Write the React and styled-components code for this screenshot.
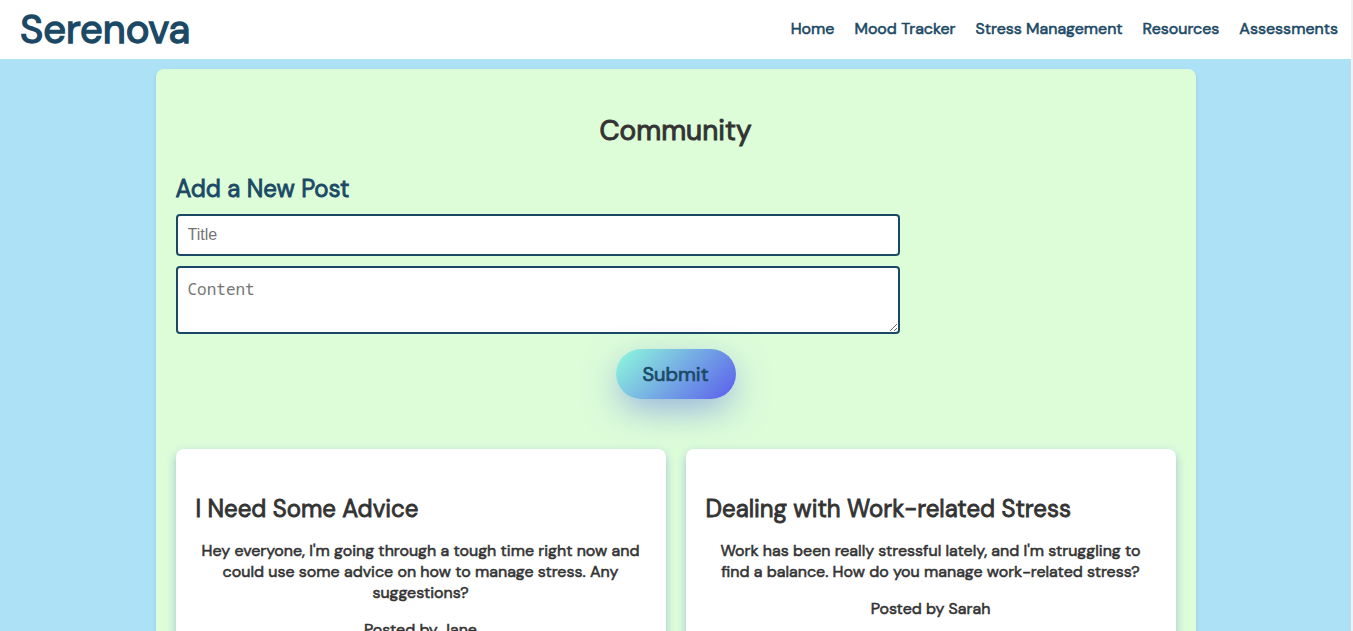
import React from "react";
import styled, { createGlobalStyle, css } from "styled-components";

const navy = "#1b4965";
const ink = "#333333";

const GlobalStyle = createGlobalStyle`
  *, *::before, *::after { box-sizing: border-box; }
  body {
    margin: 0;
    background: #ade1f5;
    color: ${ink};
    font: 400 16px/21px "DM Sans", Inter, sans-serif;
  }
`;

/* Thickens the regular cut evenly without changing its widths. */
const heavy = css`
  font-weight: 400;
  -webkit-text-stroke: 0.035em currentColor;
`;

const Page = styled.div`
  min-height: 100vh;
  border-right: 2px solid #f1f1f1;
`;

const Header = styled.header`
  display: flex;
  align-items: center;
  justify-content: space-between;
  height: 59px;
  padding: 0 13px 2px 20px;
  background: #ffffff;
`;

const Logo = styled.h1`
  ${heavy}
  margin: 0;
  color: ${navy};
  font-size: 40px;
  line-height: 52px;
`;

const Nav = styled.nav`
  display: flex;
  gap: 20px;
`;

const NavLink = styled.a`
  ${heavy}
  color: ${navy};
  text-decoration: none;
`;

const Main = styled.main`
  max-width: 1040px;
  margin: 10px auto;
  padding: 20px;
  border-radius: 8px;
  background: #ddfdd9;
  box-shadow: 0 2px 4px rgba(0, 0, 0, 0.1);
`;

const PageTitle = styled.h2`
  ${heavy}
  margin: 24px 0;
  font-size: 28px;
  line-height: 36px;
  text-align: center;
`;

const Form = styled.form`
  display: flex;
  flex-direction: column;
  gap: 10px;
  margin-bottom: 50px;
`;

const SubTitle = styled.h3`
  ${heavy}
  margin: 0;
  font-size: 24px;
  line-height: 31px;
  color: ${(p) => p.$color || ink};
`;

const field = css`
  width: calc(70% + 24px);
  padding: 10px;
  border: 2px solid ${navy};
  border-radius: 4px;
  background: #ffffff;
`;

const Input = styled.input`
  ${field}
  height: 42px;
  font: 16px/18px "Liberation Sans", Arial, sans-serif;
`;

const TextArea = styled.textarea`
  ${field}
  height: 68px;
  font: 16px/22px "Noto Sans Mono", "DejaVu Sans Mono", monospace;
`;

const SubmitButton = styled.button`
  ${heavy}
  align-self: center;
  width: 120px;
  height: 50px;
  margin-top: 5px;
  padding: 0;
  border: 0;
  border-radius: 25px;
  background: linear-gradient(135deg, #8ffbdc, #5a5cec);
  box-shadow: 0 12px 36px -4px rgba(65, 88, 230, 0.5);
  color: ${navy};
  font-family: inherit;
  font-size: 20px;
  line-height: 26px;
  cursor: pointer;
`;

const Posts = styled.section`
  display: grid;
  grid-template-columns: repeat(2, 1fr);
  gap: 20px;
`;

const Card = styled.article`
  padding: 44px 20px 20px;
  border-radius: 8px;
  background: #ffffff;
  box-shadow: 0 4px 10px rgba(50, 90, 200, 0.36);
`;

const CardText = styled.p`
  ${heavy}
  margin: 16px 0;
  text-align: center;
`;

const links = ["Home", "Mood Tracker", "Stress Management", "Resources", "Assessments"];

const posts = [
  {
    title: "I Need Some Advice",
    text: "Hey everyone, I'm going through a tough time right now and could use some advice on how to manage stress. Any suggestions?",
    author: "Jane",
  },
  {
    title: "Dealing with Work-related Stress",
    text: "Work has been really stressful lately, and I'm struggling to find a balance. How do you manage work-related stress?",
    author: "Sarah",
  },
];

export default function App() {
  return (
    <Page>
      <GlobalStyle />
      <Header>
        <Logo>Serenova</Logo>
        <Nav>
          {links.map((name) => (
            <NavLink key={name} href="#">{name}</NavLink>
          ))}
        </Nav>
      </Header>
      <Main>
        <PageTitle>Community</PageTitle>
        <Form onSubmit={(e) => e.preventDefault()}>
          <SubTitle $color={navy}>Add a New Post</SubTitle>
          <Input type="text" placeholder="Title" aria-label="Title" />
          <TextArea placeholder="Content" aria-label="Content" />
          <SubmitButton type="submit">Submit</SubmitButton>
        </Form>
        <Posts>
          {posts.map((post) => (
            <Card key={post.title}>
              <SubTitle>{post.title}</SubTitle>
              <CardText>{post.text}</CardText>
              <CardText>Posted by {post.author}</CardText>
            </Card>
          ))}
        </Posts>
      </Main>
    </Page>
  );
}
